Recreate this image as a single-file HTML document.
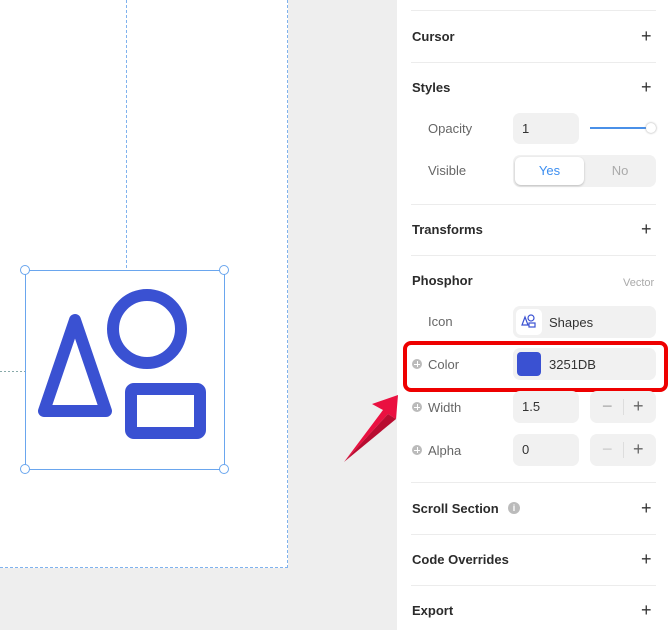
<!DOCTYPE html>
<html><head><style>
*{margin:0;padding:0;box-sizing:border-box}
body{width:671px;height:630px;overflow:hidden;background:#eeeeee;font-family:"Liberation Sans",sans-serif;position:relative}
.a{position:absolute}
.sep{position:absolute;left:411px;width:245px;height:1px;background:#ececec}
.h{position:absolute;left:412px;font-size:13px;font-weight:bold;color:#2b2b2b}
.plus{position:absolute;left:641px;font-size:18px;color:#333;line-height:1}
.lbl{position:absolute;font-size:13px;color:#666}
.box{position:absolute;background:#f1f1f1;border-radius:7px;font-size:13px;color:#333}
.pc{position:absolute;left:412px;width:10px;height:10px;border-radius:50%;background:#bbb}
.pc:before{content:"";position:absolute;left:2px;top:4.5px;width:6px;height:1px;background:#fff}
.pc:after{content:"";position:absolute;left:4.5px;top:2px;width:1px;height:6px;background:#fff}
</style></head><body>
<div class="a" style="left:0;top:0;width:288px;height:568px;background:#fff"></div>
<svg class="a" style="left:0;top:0" width="671" height="630">
<g stroke="#7fb2ee" stroke-width="1" stroke-dasharray="3,2" fill="none">
<line x1="287.5" y1="0" x2="287.5" y2="568"/>
<line x1="0" y1="567.5" x2="288" y2="567.5"/>
<line x1="126.5" y1="0" x2="126.5" y2="270"/>
</g>
<line x1="0" y1="371.5" x2="25" y2="371.5" stroke="#8aa" stroke-dasharray="2,2"/>
</svg>
<div class="a" style="left:397px;top:0;width:274px;height:630px;background:#fff"></div>
<svg class="a" style="left:0;top:0" width="671" height="630">
<rect x="25.5" y="270.5" width="199" height="199" fill="none" stroke="#6aa6ee" stroke-width="1"/>
<g fill="#fff" stroke="#6aa6ee"><circle cx="25" cy="270" r="4.5"/><circle cx="224" cy="270" r="4.5"/><circle cx="25" cy="469" r="4.5"/><circle cx="224" cy="469" r="4.5"/></g>
<g fill="none" stroke="#3a51d2" stroke-width="12" stroke-linejoin="round">
<path d="M75 320 L44 411 L106 411 Z"/>
<circle cx="147" cy="329" r="34"/>
<rect x="131" y="389" width="69" height="44" rx="3"/>
</g>
<polygon points="344,462 383,410 372,404 398,395 396,419 388,414" fill="#ea1040"/>
<polygon points="344,462 388,414 396,419" fill="#b80c30"/>
</svg>
<div class="sep" style="top:10px"></div>
<div class="h" style="top:29px">Cursor</div><div class="plus" style="top:27px">+</div>
<div class="sep" style="top:62px"></div>
<div class="h" style="top:80px">Styles</div><div class="plus" style="top:78px">+</div>
<div class="lbl" style="left:428px;top:121px">Opacity</div>
<div class="box" style="left:513px;top:113px;width:66px;height:31px;padding:8px 9px">1</div>
<div class="a" style="left:590px;top:127px;width:60px;height:2px;background:#4a90e8"></div>
<div class="a" style="left:646px;top:123px;width:10px;height:10px;border-radius:50%;background:#fff;box-shadow:0 0 2px #999"></div>
<div class="lbl" style="left:428px;top:163px">Visible</div>
<div class="box" style="left:513px;top:155px;width:143px;height:32px"></div>
<div class="a" style="left:515px;top:157px;width:69px;height:28px;background:#fff;border-radius:6px;box-shadow:0 1px 2px #bbb;text-align:center;line-height:28px;font-size:13px;color:#3c8ef0">Yes</div>
<div class="a" style="left:586px;top:157px;width:68px;height:28px;text-align:center;line-height:28px;font-size:13px;color:#aaa">No</div>
<div class="sep" style="top:204px"></div>
<div class="h" style="top:222px">Transforms</div><div class="plus" style="top:220px">+</div>
<div class="sep" style="top:255px"></div>
<div class="h" style="top:273px">Phosphor</div>
<div class="a" style="left:623px;top:277px;font-size:11px;color:#aaa">Vector</div>
<div class="lbl" style="left:428px;top:314px">Icon</div>
<div class="box" style="left:513px;top:306px;width:143px;height:32px"></div>
<div class="a" style="left:516px;top:309px;width:26px;height:26px;background:#fff;border-radius:5px"></div>
<svg class="a" style="left:521px;top:314px" width="16" height="16"><g fill="none" stroke="#3a51d2" stroke-width="1.2"><path d="M4 3 L1 11 L7 11 Z"/><circle cx="10" cy="4" r="3"/><rect x="8" y="9" width="6" height="4"/></g></svg>
<div class="a" style="left:549px;top:315px;font-size:13px;color:#333">Shapes</div>
<div class="a" style="left:403px;top:341px;width:265px;height:51px;border:4px solid #ee0000;border-radius:8px"></div>
<div class="pc" style="top:359px"></div>
<div class="lbl" style="left:428px;top:357px">Color</div>
<div class="box" style="left:513px;top:348px;width:143px;height:32px"></div>
<div class="a" style="left:517px;top:352px;width:24px;height:24px;background:#3a51d2;border-radius:4px"></div>
<div class="a" style="left:549px;top:357px;font-size:13px;color:#333">3251DB</div>
<div class="pc" style="top:402px"></div>
<div class="lbl" style="left:428px;top:400px">Width</div>
<div class="box" style="left:513px;top:391px;width:66px;height:32px;padding:8px 9px">1.5</div>
<div class="box" style="left:590px;top:391px;width:66px;height:32px"></div>
<div class="a" style="left:602px;top:396px;font-size:18px;color:#aaa">−</div><div class="a" style="left:623px;top:399px;width:1px;height:16px;background:#ddd"></div><div class="a" style="left:633px;top:396px;font-size:18px;color:#666">+</div>
<div class="pc" style="top:445px"></div>
<div class="lbl" style="left:428px;top:443px">Alpha</div>
<div class="box" style="left:513px;top:434px;width:66px;height:32px;padding:8px 9px">0</div>
<div class="box" style="left:590px;top:434px;width:66px;height:32px"></div>
<div class="a" style="left:602px;top:439px;font-size:18px;color:#ccc">−</div><div class="a" style="left:623px;top:442px;width:1px;height:16px;background:#ddd"></div><div class="a" style="left:633px;top:439px;font-size:18px;color:#666">+</div>
<div class="sep" style="top:482px"></div>
<div class="h" style="top:501px">Scroll Section</div>
<div class="a" style="left:508px;top:502px;width:12px;height:12px;border-radius:50%;background:#bbb;color:#fff;font-size:9px;text-align:center;line-height:12px;font-weight:bold">i</div>
<div class="plus" style="top:499px">+</div>
<div class="sep" style="top:534px"></div>
<div class="h" style="top:552px">Code Overrides</div><div class="plus" style="top:550px">+</div>
<div class="sep" style="top:585px"></div>
<div class="h" style="top:603px">Export</div><div class="plus" style="top:601px">+</div>
</body></html>
